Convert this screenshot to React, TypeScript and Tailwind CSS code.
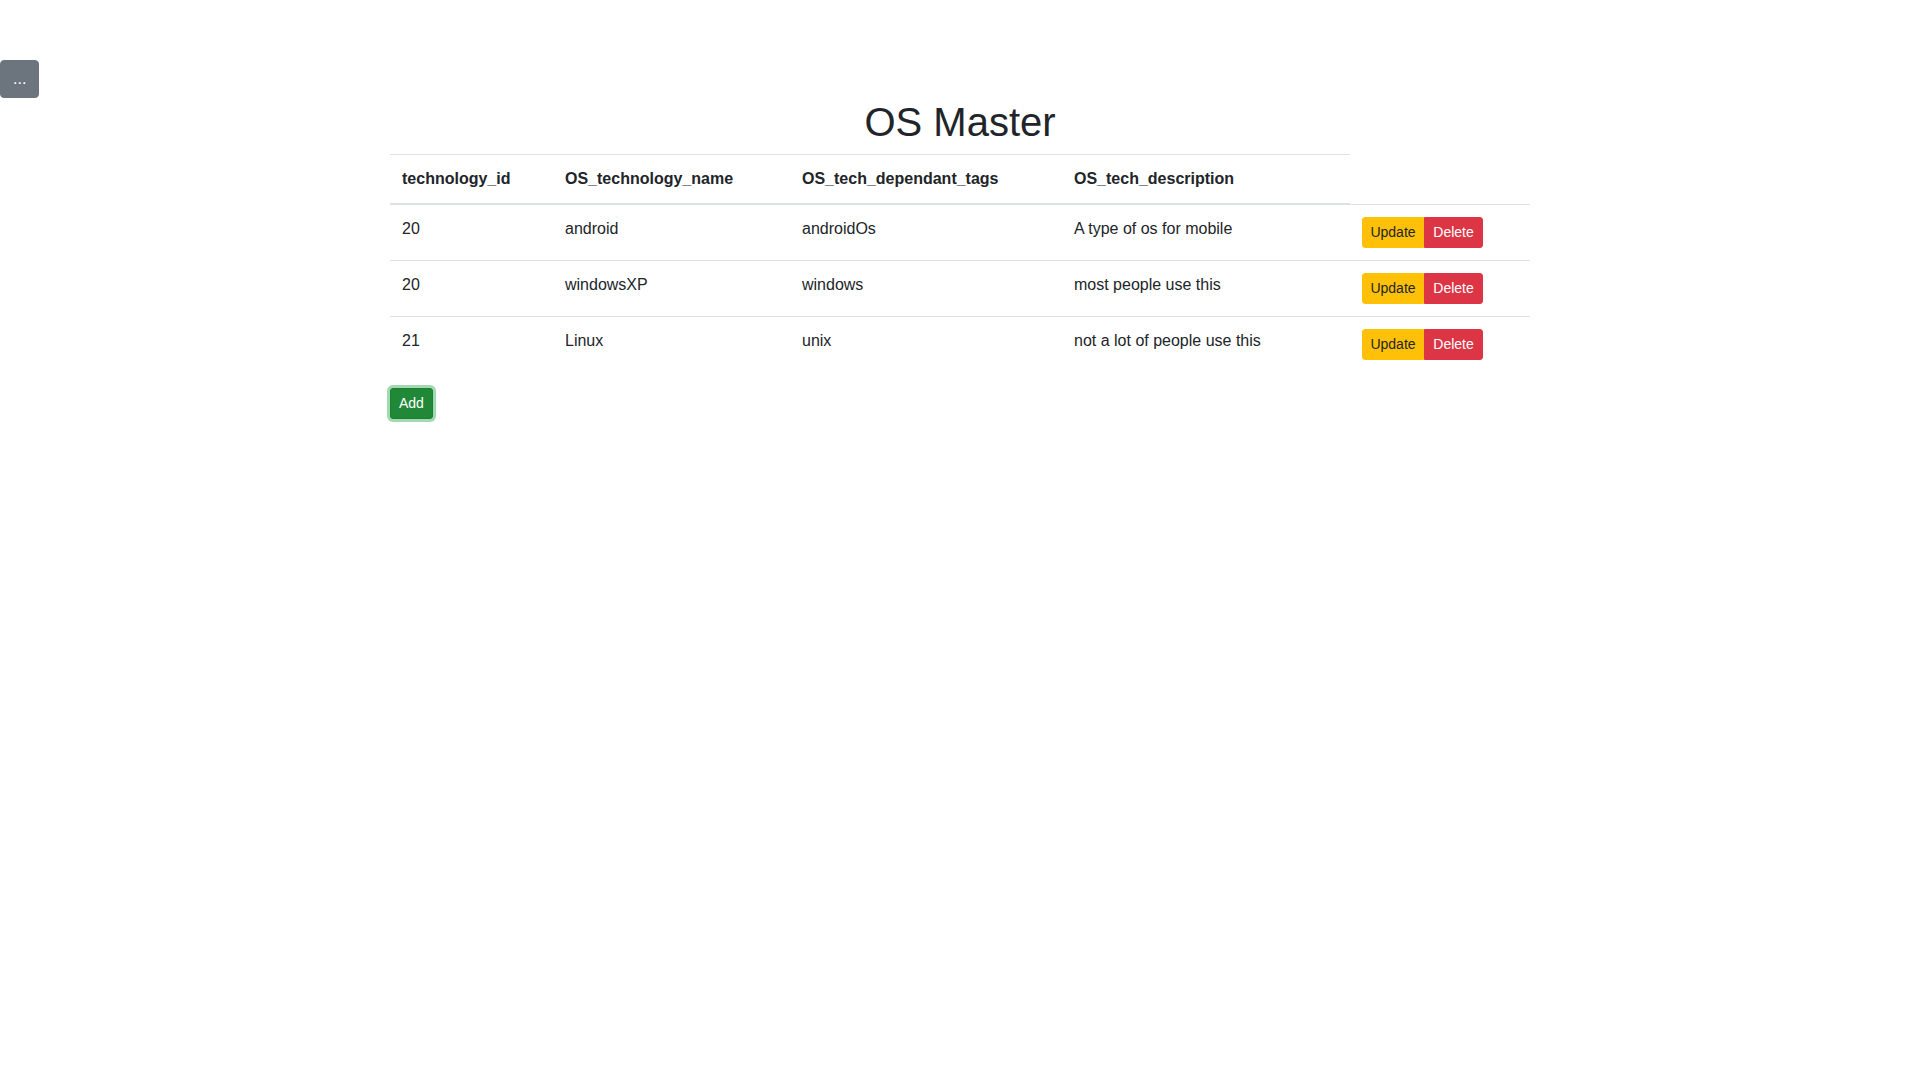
const rows = [
  { id: '20', name: 'android', tags: 'androidOs', desc: 'A type of os for mobile' },
  { id: '20', name: 'windowsXP', tags: 'windows', desc: 'most people use this' },
  { id: '21', name: 'Linux', tags: 'unix', desc: 'not a lot of people use this' },
];

export default function App() {
  return (
    <div className="min-h-screen bg-white text-[#212529] font-['Liberation_Sans',Arial,sans-serif] text-base leading-6">
      <div className="pt-[60px]">
        <button className="h-[38px] px-3 rounded border border-[#6c757d] bg-[#6c757d] text-white text-base leading-6">...</button>
      </div>
      <div className="w-[1140px] mx-auto">
        <h1 className="mb-2 text-[40px] leading-[1.2] font-normal text-center">OS Master</h1>
        <table className="w-[1140px] border-collapse mb-4">
          <thead>
            <tr>
              <th className="w-[163px] p-3 text-left align-bottom font-bold border-t border-b-2 border-[#dee2e6]">technology_id</th>
              <th className="w-[237px] p-3 text-left align-bottom font-bold border-t border-b-2 border-[#dee2e6]">OS_technology_name</th>
              <th className="w-[272px] p-3 text-left align-bottom font-bold border-t border-b-2 border-[#dee2e6]">OS_tech_dependant_tags</th>
              <th className="w-[288px] p-3 text-left align-bottom font-bold border-t border-b-2 border-[#dee2e6]">OS_tech_description</th>
            </tr>
          </thead>
          <tbody>
            {rows.map((r, i) => (
              <tr key={i}>
                <td className="p-3 align-top border-t border-[#dee2e6]">{r.id}</td>
                <td className="p-3 align-top border-t border-[#dee2e6]">{r.name}</td>
                <td className="p-3 align-top border-t border-[#dee2e6]">{r.tags}</td>
                <td className="p-3 align-top border-t border-[#dee2e6]">{r.desc}</td>
                <td className="w-[180px] p-3 align-top border-t border-[#dee2e6]">
                  <div className="flex">
                    <button className="w-[62px] h-[31px] text-sm leading-[1.5] bg-[#ffc107] text-[#212529] border border-[#ffc107] rounded-l-[3px]">Update</button>
                    <button className="w-[59px] h-[31px] text-sm leading-[1.5] bg-[#dc3545] text-white border border-[#dc3545] rounded-r-[3px]">Delete</button>
                  </div>
                </td>
              </tr>
            ))}
          </tbody>
        </table>
        <button className="h-[31px] px-2 text-sm leading-[1.5] bg-[#218838] text-white border border-[#1e7e34] rounded-[3px] shadow-[0_0_0_3px_rgba(72,180,97,0.5)]">Add</button>
      </div>
    </div>
  );
}
